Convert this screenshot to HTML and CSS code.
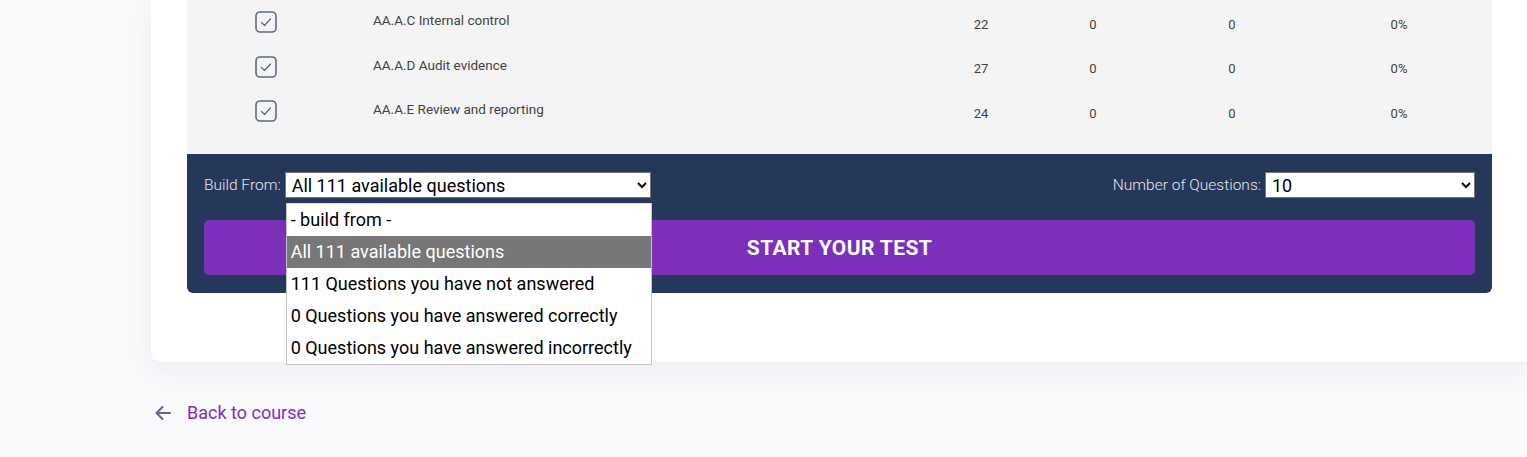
FILE: index.html
```html
<!DOCTYPE html>
<html lang="en">
<head>
<meta charset="utf-8">
<title>Build test</title>
<link rel="stylesheet" href="styles.css">
</head>
<body>
<div class="page">
  <div class="card">
    <div class="topics">
      <div class="row">
        <span class="check"><svg viewBox="0 0 22 22" width="22" height="22"><rect x="1" y="1" width="20" height="20" rx="4" fill="none" stroke="#5d6b84" stroke-width="1.6"/><path d="M6.5 11.5 L9.5 14.5 L15.5 8" fill="none" stroke="#5d6b84" stroke-width="1.3" stroke-linecap="round" stroke-linejoin="round"/></svg></span>
        <span class="title">AA.A.C Internal control</span>
        <span class="num">22</span><span class="num">0</span><span class="num">0</span><span class="num">0%</span>
      </div>
      <div class="row">
        <span class="check"><svg viewBox="0 0 22 22" width="22" height="22"><rect x="1" y="1" width="20" height="20" rx="4" fill="none" stroke="#5d6b84" stroke-width="1.6"/><path d="M6.5 11.5 L9.5 14.5 L15.5 8" fill="none" stroke="#5d6b84" stroke-width="1.3" stroke-linecap="round" stroke-linejoin="round"/></svg></span>
        <span class="title">AA.A.D Audit evidence</span>
        <span class="num">27</span><span class="num">0</span><span class="num">0</span><span class="num">0%</span>
      </div>
      <div class="row">
        <span class="check"><svg viewBox="0 0 22 22" width="22" height="22"><rect x="1" y="1" width="20" height="20" rx="4" fill="none" stroke="#5d6b84" stroke-width="1.6"/><path d="M6.5 11.5 L9.5 14.5 L15.5 8" fill="none" stroke="#5d6b84" stroke-width="1.3" stroke-linecap="round" stroke-linejoin="round"/></svg></span>
        <span class="title">AA.A.E Review and reporting</span>
        <span class="num">24</span><span class="num">0</span><span class="num">0</span><span class="num">0%</span>
      </div>
    </div>
    <div class="builder">
      <div class="controls">
        <label class="field">Build From:
          <span class="select-wrap">
            <select class="sel sel-build">
              <option>- build from -</option>
              <option selected>All 111 available questions</option>
              <option>111 Questions you have not answered</option>
              <option>0 Questions you have answered correctly</option>
              <option>0 Questions you have answered incorrectly</option>
            </select>
            <div class="listbox">
              <div class="opt">- build from -</div>
              <div class="opt active">All 111 available questions</div>
              <div class="opt">111 Questions you have not answered</div>
              <div class="opt">0 Questions you have answered correctly</div>
              <div class="opt">0 Questions you have answered incorrectly</div>
            </div>
          </span>
        </label>
        <label class="field">Number of Questions:
          <select class="sel sel-num">
            <option selected>10</option>
            <option>20</option>
            <option>50</option>
          </select>
        </label>
      </div>
      <button class="start">START YOUR TEST</button>
    </div>
  </div>
  <a class="back" href="#"><svg viewBox="0 0 20 20" width="20" height="20"><path d="M17 10 H3.5 M9.5 4 L3.5 10 L9.5 16" fill="none" stroke="#5b6a80" stroke-width="2" stroke-linecap="round" stroke-linejoin="round"/></svg><span>Back to course</span></a>
</div>
</body>
</html>
```

FILE: styles.css
```css
html, body {
  margin: 0;
  padding: 0;
  height: 100%;
  overflow: hidden;
}
body {
  background: #f9f9fc;
  font-family: Roboto, "Liberation Sans", Arial, sans-serif;
}
.page {
  padding-left: 151px;
}
.card {
  background: #ffffff;
  border-radius: 0 0 0 12px;
  padding: 0 35px 69px 36px;
  box-shadow: 0 8px 24px rgba(30, 30, 70, 0.05);
}
.topics {
  background: #f4f4f4;
  padding-top: 2px;
  padding-bottom: 18.5px;
}
.row {
  display: grid;
  grid-template-columns: 186px 548px 120px 104px 174px 160px 1fr;
  height: 44.5px;
  align-items: center;
  color: #444;
}
.check {
  margin-left: 68px;
  display: flex;
  transform: translateY(-2px);
}
.title {
  font-size: 13.5px;
  color: #444;
  transform: translateY(-4px);
}
.num {
  font-size: 13px;
  text-align: center;
  color: #444;
}
.builder {
  background: #253859;
  border-radius: 0 0 6px 6px;
  padding: 18px 17px 18px 17px;
}
.controls {
  display: flex;
  justify-content: space-between;
  align-items: center;
}
.field {
  display: flex;
  align-items: center;
  gap: 4px;
  color: #e6e6ee;
  font-size: 15.5px;
  font-weight: 300;
}
.select-wrap {
  position: relative;
  display: flex;
}
.sel {
  font-family: Roboto, "Liberation Sans", Arial, sans-serif;
  font-size: 18px;
  height: 26px;
  color: #000;
  background: #fff;
  border: 1px solid #767676;
  border-radius: 0;
  padding: 0 0 0 2px;
}
.sel-build {
  width: 366px;
}
.sel-num {
  width: 210px;
}
.listbox {
  position: absolute;
  top: 31px;
  left: 1px;
  width: 364px;
  background: #fff;
  border: 1px solid #c4c4c4;
  border-top: 1px solid #e0e0e0;
  z-index: 10;
  color: #000;
  font-size: 18px;
  font-weight: 400;
}
.opt {
  height: 32px;
  line-height: 32px;
  padding-left: 4px;
  white-space: nowrap;
}
.opt.active {
  background: #777777;
  color: #ffffff;
}
.start {
  display: block;
  width: 100%;
  height: 55px;
  margin-top: 22px;
  background: #7b2fbb;
  border: none;
  border-radius: 5px;
  color: #fff;
  font-family: Roboto, "Liberation Sans", Arial, sans-serif;
  font-weight: 700;
  font-size: 21px;
  letter-spacing: 0.4px;
}
.back {
  display: inline-flex;
  align-items: center;
  gap: 14px;
  margin-top: 40px;
  margin-left: 2px;
  color: #7b2fbb;
  text-decoration: none;
  font-size: 18px;
  line-height: 22px;
}
```
